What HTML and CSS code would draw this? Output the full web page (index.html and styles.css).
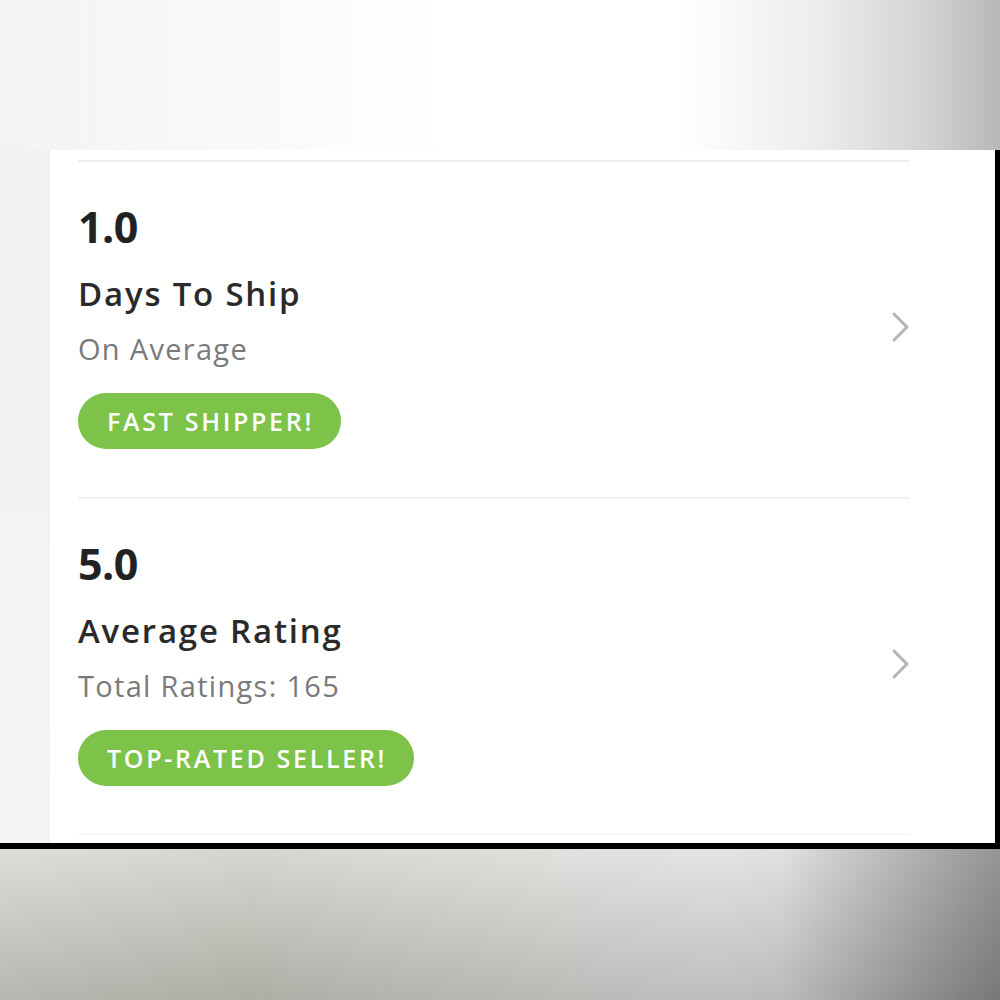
FILE: index.html
```html
<!DOCTYPE html>
<html lang="en">
<head>
    <meta charset="UTF-8">
    <meta name="viewport" content="width=device-width, initial-scale=1.0">
    <title>Seller Stats</title>
    <link rel="stylesheet" href="styles.css">
</head>
<body>

    <div class="top-band"></div>

    <div class="screen">
        <div class="gutter"></div>

        <section class="card">
            <div class="stat-row">
                <div class="stat-info">
                    <div class="stat-value">1.0</div>
                    <div class="stat-title">Days To Ship</div>
                    <div class="stat-sub">On Average</div>
                    <span class="badge">FAST SHIPPER!</span>
                </div>
                <svg class="chevron" width="22" height="32" viewBox="0 0 22 32">
                    <polyline points="4,3 17,16 4,29" fill="none" stroke="#b4b4b4" stroke-width="3" stroke-linecap="round" stroke-linejoin="round"/>
                </svg>
            </div>

            <div class="stat-row">
                <div class="stat-info">
                    <div class="stat-value">5.0</div>
                    <div class="stat-title">Average Rating</div>
                    <div class="stat-sub">Total Ratings: 165</div>
                    <span class="badge">TOP-RATED SELLER!</span>
                </div>
                <svg class="chevron" width="22" height="32" viewBox="0 0 22 32">
                    <polyline points="4,3 17,16 4,29" fill="none" stroke="#b4b4b4" stroke-width="3" stroke-linecap="round" stroke-linejoin="round"/>
                </svg>
            </div>
        </section>
    </div>

    <div class="bottom-band"></div>

</body>
</html>
```

FILE: styles.css
```css
body {
    margin: 0;
    font-family: 'Open Sans', 'Liberation Sans', sans-serif;
    background-color: #f2f2f0;
    color: #222;
}

.top-band {
    height: 150px;
    background: linear-gradient(90deg, #f3f3f1 0%, #fbfbfa 30%, #ffffff 45%, #ffffff 68%, #ececec 82%, #d2d2d2 93%, #b8b8b8 100%);
}

.screen {
    display: flex;
    height: 693px;
    border-right: 5px solid #000;
    border-bottom: 6px solid #000;
}

.gutter {
    width: 50px;
    background: linear-gradient(180deg, #f1f2ef 0%, #f4f4f2 100%);
}

.card {
    flex: 1;
    background-color: #fff;
    padding: 10px 85px 0 28px;
}

.stat-row {
    display: flex;
    align-items: center;
    justify-content: space-between;
    border-top: 2px solid #f0f0f0;
    padding: 43px 0 48px;
}

.stat-row:last-child {
    border-bottom: 1px solid #f3f3f3;
}

.stat-info {
    display: flex;
    flex-direction: column;
    align-items: flex-start;
}

.stat-value {
    font-size: 43px;
    line-height: 43px;
    font-weight: 700;
    letter-spacing: -0.5px;
    color: #222;
}

.stat-title {
    margin-top: 26px;
    font-size: 33px;
    line-height: 40px;
    font-weight: 600;
    letter-spacing: 1.8px;
    color: #2a2a2a;
}

.stat-sub {
    margin-top: 18px;
    font-size: 29px;
    line-height: 34px;
    letter-spacing: 1.3px;
    color: #7a7a7a;
}

.badge {
    margin-top: 27px;
    height: 56px;
    line-height: 56px;
    padding: 0 27px 0 29px;
    border-radius: 28px;
    background-color: #7dc34a;
    color: #fff;
    font-size: 25px;
    font-weight: 600;
    letter-spacing: 2.7px;
}

.chevron {
    margin-right: -2px;
}

.bottom-band {
    height: 151px;
    background:
        linear-gradient(90deg, rgba(0, 0, 0, 0) 0%, rgba(0, 0, 0, 0) 78%, rgba(0, 0, 0, 0.3) 100%),
        linear-gradient(180deg, rgba(255, 255, 255, 0.3) 0%, rgba(0, 0, 0, 0.12) 100%),
        linear-gradient(90deg, #cdd1c8 0%, #c2c7bc 25%, #d3d3cf 55%, #d8d8d8 72%, #c4c4c4 100%);
}
```
